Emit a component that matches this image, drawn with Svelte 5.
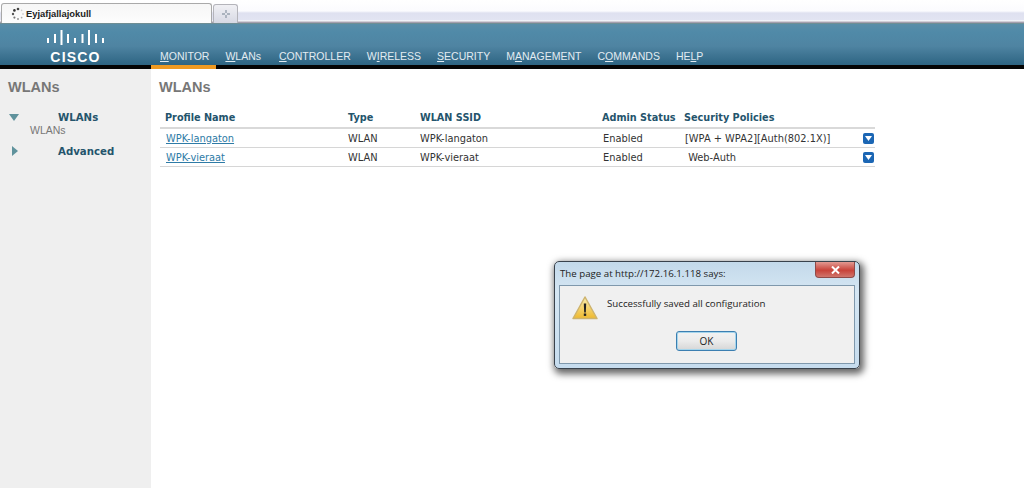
<script>
  const menu = [
    { label: "MONITOR", key: 0, active: true },
    { label: "WLANs", key: 0 },
    { label: "CONTROLLER", key: 0 },
    { label: "WIRELESS", key: 1 },
    { label: "SECURITY", key: 0 },
    { label: "MANAGEMENT", key: 1 },
    { label: "COMMANDS", key: 1 },
    { label: "HELP", key: 2 }
  ];

  const rows = [
    { name: "WPK-langaton", type: "WLAN", ssid: "WPK-langaton", status: "Enabled", policy: "[WPA + WPA2][Auth(802.1X)]" },
    { name: "WPK-vieraat", type: "WLAN", ssid: "WPK-vieraat", status: "Enabled", policy: "\u00a0Web-Auth" }
  ];
</script>

<div class="page">
  <div class="tabstrip">
    <div class="tab">
      <svg class="spinner" width="14" height="14" viewBox="0 0 14 14">
        <circle cx="7" cy="2" r="1.3" fill="#444" />
        <circle cx="3.4" cy="3.4" r="1.3" fill="#333" />
        <circle cx="2" cy="7" r="1.2" fill="#555" />
        <circle cx="3.4" cy="10.6" r="1.1" fill="#777" />
        <circle cx="7" cy="12" r="1" fill="#999" />
        <circle cx="10.6" cy="10.6" r="0.9" fill="#aaa" />
        <circle cx="12" cy="7" r="0.8" fill="#bbb" />
        <circle cx="10.6" cy="3.4" r="0.8" fill="#ccc" />
      </svg>
      <span>Eyjafjallajokull</span>
    </div>
    <div class="newtab">
      <svg width="8" height="8" viewBox="0 0 8 8">
        <path d="M4 0v3M4 5v3M0 4h3M5 4h3" stroke="#98a2ae" stroke-width="1.4" />
      </svg>
    </div>
  </div>

  <header class="topbar">
    <div class="logo">
      <svg width="57" height="15" viewBox="0 0 57 15" fill="none" stroke="#fff" stroke-width="2">
        <path d="M1 8v5M8 4v9M14.500 0v15M21 4v9M28 8v5M35.500 4v9M42 0v15M49 4v9M56 8v5" />
      </svg>
      <div class="wordmark">CISCO</div>
    </div>
    <nav class="menu">
      {#each menu as item}
        <a class="menu-item" class:active={item.active} href="#top">{item.label.slice(0, item.key)}<u>{item.label[item.key]}</u>{item.label.slice(item.key + 1)}</a>
      {/each}
    </nav>
  </header>

  <div class="main">
    <aside class="sidebar">
      <h2>WLANs</h2>
      <div class="side-row first">
        <span class="arrow"><svg width="10" height="7" viewBox="0 0 10 7"><path d="M0 0h10L5 7z" fill="#5f929c" /></svg></span>
        <span>WLANs</span>
      </div>
      <div class="side-sub">WLANs</div>
      <div class="side-row second">
        <span class="arrow narrow"><svg width="6" height="10" viewBox="0 0 6 10"><path d="M0 0l6 5-6 5z" fill="#5f929c" /></svg></span>
        <span>Advanced</span>
      </div>
    </aside>

    <section class="content">
      <h2>WLANs</h2>
      <table>
        <thead>
          <tr>
            <th class="c-name">Profile Name</th>
            <th class="c-type">Type</th>
            <th class="c-ssid">WLAN SSID</th>
            <th class="c-status">Admin Status</th>
            <th class="c-policy">Security Policies</th>
            <th class="c-btn"></th>
          </tr>
        </thead>
        <tbody>
          {#each rows as row}
            <tr>
              <td class="link"><a href="#top">{row.name}</a></td>
              <td>{row.type}</td>
              <td>{row.ssid}</td>
              <td>{row.status}</td>
              <td>{row.policy}</td>
              <td class="c-btn">
                <span class="drop"><svg width="7" height="5" viewBox="0 0 7 5"><path d="M0 0h7L3.500 5z" fill="#fff" /></svg></span>
              </td>
            </tr>
          {/each}
        </tbody>
      </table>
    </section>
  </div>

  <div class="dialog">
    <div class="titlebar">
      <span>The page at http://172.16.1.118 says:</span>
      <div class="close">
        <svg width="9" height="8" viewBox="0 0 9 8"><path d="M1 0.500l7 7M8 0.500l-7 7" stroke="#fff" stroke-width="2" /></svg>
      </div>
    </div>
    <div class="dialog-body">
      <div class="message">
        <svg width="26" height="24" viewBox="0 0 26 24">
          <defs>
            <linearGradient id="warn" x1="0" y1="0" x2="0" y2="1">
              <stop offset="0" stop-color="#fbeeb0" />
              <stop offset="1" stop-color="#eeb92e" />
            </linearGradient>
          </defs>
          <path d="M13 1L25 22.500H1z" fill="url(#warn)" stroke="#cdb36e" stroke-width="1.500" stroke-linejoin="round" />
          <path d="M11.800 7.500h2.400l-.4 9h-1.600z" fill="#222" />
          <rect x="11.800" y="17.500" width="2.400" height="2.400" fill="#222" />
        </svg>
        <span class="message-text">Successfully saved all configuration</span>
      </div>
      <button class="ok">OK</button>
    </div>
  </div>
</div>

<style>
  :global(body) {
    margin: 0;
    background: #fff;
  }

  .page {
    position: relative;
    width: 1024px;
    height: 488px;
    overflow: hidden;
    display: flex;
    flex-direction: column;
    font-family: "DejaVu Sans", sans-serif;
  }

  /* --- Browser tabs --- */
  .tabstrip {
    height: 23px;
    display: flex;
    align-items: flex-end;
    padding-left: 1px;
    gap: 1px;
    box-sizing: border-box;
    background: linear-gradient(to bottom, #fff 0, #fbfbfe 11px, #dfe1f0 13px, #e2e4f2 20px, #fff 21px, #a49fae 22px);
  }
  .tab {
    width: 211px;
    height: 20px;
    box-sizing: border-box;
    display: flex;
    align-items: center;
    gap: 1px;
    padding-left: 9px;
    background: linear-gradient(to bottom, #f6f6f6, #fdfdfd);
    border: 1px solid #a9a9a9;
    border-bottom: 0;
    border-radius: 3px 3px 0 0;
    font-family: "Liberation Sans", sans-serif;
    font-size: 9.400px;
    font-weight: bold;
    color: #222;
  }
  .newtab {
    width: 25px;
    height: 19px;
    box-sizing: border-box;
    display: flex;
    align-items: center;
    justify-content: center;
    background: linear-gradient(to bottom, #f0f0f4, #d7d9e4);
    border: 1px solid #b4b4ba;
    border-bottom: 0;
    border-radius: 3px 3px 0 0;
  }

  /* --- Cisco bar --- */
  .topbar {
    height: 46px;
    box-sizing: border-box;
    display: flex;
    background: linear-gradient(to bottom, #5a8ea8 0, #508aa8 8px, #4f84a2 22px, #2f6684 40px, #2f6480 41px, #050505 41px);
    border-top: 1px solid #6f8e94;
  }
  .logo {
    width: 160px;
    flex-shrink: 0;
    display: flex;
    flex-direction: column;
    align-items: center;
    padding: 6px 9px 0 0;
    box-sizing: border-box;
  }
  .logo svg {
    flex-shrink: 0;
  }
  .wordmark {
    margin-top: 5px;
    font-family: "Liberation Sans", sans-serif;
    font-weight: bold;
    font-size: 14px;
    line-height: 14px;
    letter-spacing: 1.200px;
    color: #fff;
  }
  .menu {
    display: flex;
    align-items: flex-end;
    margin-left: -9px;
    height: 45px;
  }
  .menu-item {
    height: 45px;
    box-sizing: border-box;
    padding: 25px 7px 0 9px;
    font-family: "Liberation Sans", sans-serif;
    font-size: 10.500px;
    line-height: 14px;
    color: #e2ecf2;
    text-decoration: none;
  }
  .menu-item:nth-child(2) {
    padding-right: 9px;
  }
  .menu-item.active {
    box-shadow: inset 0 -4px 0 #ee9a22;
  }

  /* --- Page body --- */
  .main {
    flex: 1;
    display: flex;
    min-height: 0;
  }
  .sidebar {
    width: 151px;
    flex-shrink: 0;
    box-sizing: border-box;
    padding: 10px 0 0 8px;
    background: #efefef;
  }
  h2 {
    margin: 0;
    font-family: "Liberation Sans", sans-serif;
    font-size: 14.500px;
    line-height: 17px;
    font-weight: bold;
    color: #777;
  }
  .side-row {
    display: flex;
    align-items: center;
    height: 14px;
    font-size: 10.200px;
    font-weight: bold;
    color: #24546c;
  }
  .side-row.first {
    margin-top: 14px;
  }
  .side-row.second {
    margin-top: 7px;
  }
  .arrow {
    width: 50px;
    display: flex;
    padding-left: 1px;
    box-sizing: border-box;
  }
  .arrow.narrow {
    padding-left: 4px;
  }
  .side-sub {
    margin: 0 0 0 22px;
    font-family: "Liberation Sans", sans-serif;
    font-size: 10.500px;
    line-height: 13px;
    color: #777;
  }

  .content {
    flex: 1;
    padding: 10px 0 0 8px;
  }
  table {
    margin: 12px 0 0 1px;
    width: 715px;
    table-layout: fixed;
    border-collapse: collapse;
    font-size: 9.850px;
  }
  th {
    height: 19px;
    padding: 0 0 0 5px;
    text-align: left;
    font-size: 9.700px;
    font-weight: bold;
    color: #24546c;
    border-bottom: 2px solid #d9d9d9;
  }
  td {
    height: 18px;
    padding: 0 0 0 5px;
    color: #333;
    border-bottom: 1px solid #d6d6d6;
    white-space: nowrap;
  }
  td a {
    color: #2e7ba6;
  }
  th.c-name { width: 178px; }
  td.link { padding-left: 6px; }
  .c-type { width: 67px; }
  .c-ssid { width: 178px; }
  th.c-status { width: 78px; padding-left: 4px; }
  th.c-policy { width: 179px; padding-left: 4px; }
  th.c-btn, td.c-btn { padding: 0; }
  .drop {
    display: flex;
    align-items: center;
    justify-content: center;
    width: 11px;
    height: 11px;
    border-radius: 2px;
    background: #1b66b4;
  }

  /* --- Alert window --- */
  .dialog {
    position: absolute;
    left: 554px;
    top: 261px;
    width: 306px;
    height: 108px;
    box-sizing: border-box;
    padding: 0 4px 4px;
    display: flex;
    flex-direction: column;
    border: 1px solid #39424c;
    border-radius: 5px;
    background: linear-gradient(to bottom, #c3d9ea, #d5e6f3 30px, #c6dcee);
    box-shadow: 2px 3px 7px 2px rgba(0, 0, 0, 0.6);
    font-family: "Open Sans", sans-serif;
    font-size: 9.700px;
    color: #222;
  }
  .titlebar {
    height: 22px;
    margin-bottom: 1px;
    flex-shrink: 0;
    display: flex;
    align-items: center;
    justify-content: space-between;
    padding-left: 1px;
    font-size: 9.700px;
  }
  .close {
    align-self: flex-start;
    width: 38px;
    height: 15px;
    display: flex;
    align-items: center;
    justify-content: center;
    background: linear-gradient(to bottom, #e29a92, #c8433a 55%, #d0756c);
    border: 1px solid #8f4a48;
    border-top: 0;
    border-radius: 0 0 4px 4px;
  }
  .dialog-body {
    flex: 1;
    display: flex;
    flex-direction: column;
    background: #f0f0f0;
    border: 1px solid #7f98ac;
  }
  .message {
    display: flex;
    align-items: flex-start;
    gap: 9px;
    height: 45px;
    padding: 10px 0 0 12px;
    box-sizing: border-box;
  }
  .message-text {
    margin-top: 1px;
  }
  .ok {
    align-self: flex-end;
    width: 61px;
    height: 20px;
    margin: 0 117px 0 0;
    padding: 0;
    font-family: "Open Sans", sans-serif;
    font-size: 10px;
    color: #222;
    background: linear-gradient(to bottom, #f2f2f2, #ebebeb 50%, #d6d6d6);
    border: 1px solid #3c7fb1;
    border-radius: 3px;
    box-shadow: inset 0 0 0 1px #a5d5ec;
  }
</style>
